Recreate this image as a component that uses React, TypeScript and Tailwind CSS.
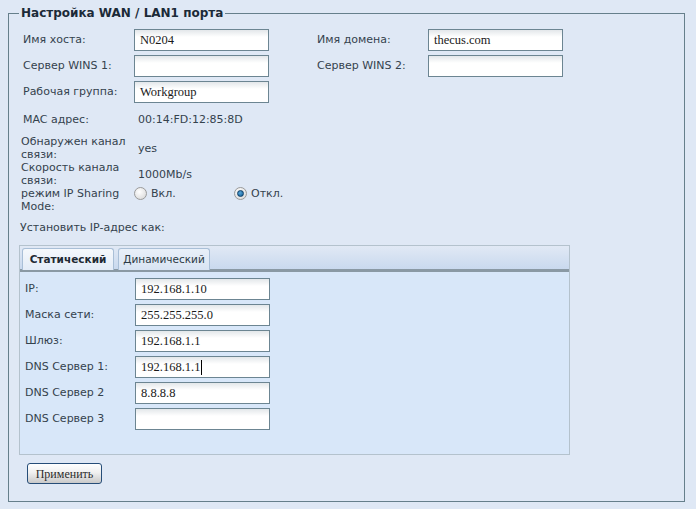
import React from "react";

const sans = "font-['DejaVu_Sans',Verdana,sans-serif]";
const serif = "font-['Liberation_Serif','Times_New_Roman',serif]";

function Field({ value = "", caret = false }: { value?: string; caret?: boolean }) {
  return (
    <div
      className={`${serif} flex h-[22px] w-[135px] items-center border border-[#6c8592] bg-[linear-gradient(#e3e7ea,#ffffff_7px)] pl-[5px] text-[12.5px] text-[#1a1a1a]`}
    >
      <span>{value}</span>
      {caret && <span className="ml-px inline-block h-[15px] w-px bg-black" />}
    </div>
  );
}

function Radio({ checked }: { checked?: boolean }) {
  return (
    <span className="flex h-[13px] w-[13px] items-center justify-center rounded-full border border-[#9a9a9a] bg-[radial-gradient(circle_at_40%_35%,#ffffff,#d4d4d4)]">
      {checked && <span className="h-[7px] w-[7px] rounded-full border border-[#0e3e66] bg-[radial-gradient(circle_at_40%_35%,#5aa6d8,#0d5a93)]" />}
    </span>
  );
}

const topRows = [
  ["Имя хоста:", "N0204", "Имя домена:", "thecus.com"],
  ["Сервер WINS 1:", "", "Сервер WINS 2:", ""],
  ["Рабочая группа:", "Workgroup", null, null],
];

const ipRows: [string, string, boolean?][] = [
  ["IP:", "192.168.1.10"],
  ["Маска сети:", "255.255.255.0"],
  ["Шлюз:", "192.168.1.1"],
  ["DNS Сервер 1:", "192.168.1.1", true],
  ["DNS Сервер 2", "8.8.8.8"],
  ["DNS Сервер 3", ""],
];

export default function App() {
  return (
    <div className={`${sans} min-h-[509px] w-[696px] bg-[#dfe8f5] pt-[6px] text-[11px] text-[#34424d]`}>
      <fieldset className="ml-2 w-[677px] border border-[#667f8b] px-[10px] pb-[17px]">
        <legend className="px-[2px] text-[12px] leading-[14px] font-bold text-[#1b2a38]">
          Настройка WAN / LAN1 порта
        </legend>

        <div className="pt-[9px]">
          {/* host / domain block */}
          <div className="grid grid-cols-[111px_135px_48px_111px_135px] gap-y-[4px] pl-1">
            {topRows.map((r, i) => (
              <React.Fragment key={i}>
                <div className="flex h-[22px] items-center">{r[0]}</div>
                <Field value={r[1] as string} />
                <div />
                {r[2] !== null ? (
                  <>
                    <div className="flex h-[22px] items-center">{r[2]}</div>
                    <Field value={r[3] as string} />
                  </>
                ) : (
                  <>
                    <div />
                    <div />
                  </>
                )}
              </React.Fragment>
            ))}
          </div>

          <div className="mt-[9px] flex h-[16px] items-center pl-1">
            <div className="w-[111px]">MAC адрес:</div>
            <div className="pl-1">00:14:FD:12:85:8D</div>
          </div>

          <div className="mt-[7px] flex h-[26px] items-center pl-[2px] leading-[13px]">
            <div className="w-[113px]">
              Обнаружен канал
              <br />
              связи:
            </div>
            <div className="pl-1">yes</div>
          </div>
          <div className="flex h-[26px] items-center pl-[2px] leading-[13px]">
            <div className="w-[113px]">
              Скорость канала
              <br />
              связи:
            </div>
            <div className="pl-1">1000Mb/s</div>
          </div>
          <div className="flex h-[26px] items-start pl-[2px] leading-[13px]">
            <div className="w-[113px]">
              режим IP Sharing
              <br />
              Mode:
            </div>
            <div className="flex w-[100px] items-center gap-[4px]">
              <Radio />
              <span>Вкл.</span>
            </div>
            <div className="flex items-center gap-[4px]">
              <Radio checked />
              <span>Откл.</span>
            </div>
          </div>

          <div className="mt-[7px] flex h-[16px] items-center pl-px">Установить IP-адрес как:</div>

          {/* tab panel */}
          <div className="mt-[9px] w-[551px] border border-[#b4c2cd] bg-[#d8e7f9]">
            <div className="flex h-[26px] gap-[4px] border-b-[3px] border-[#8a99a4] bg-[linear-gradient(#e1e9f5,#c9d9ee)] pt-[2px] pl-[2px]">
              <div className="flex h-[22px] w-[92px] items-center justify-center rounded-t-[3px] border border-b-0 border-[#a9bfd7] bg-[linear-gradient(#f5f8fc,#e3ecf7)] text-[10.5px] font-bold text-[#1f2a33]">
                Статический
              </div>
              <div className="flex h-[22px] w-[92px] items-center justify-center rounded-t-[3px] border border-b-0 border-[#a9bfd7] bg-[linear-gradient(#e9f0f9,#d8e4f3)] text-[10.5px] text-[#2c3a45]">
                Динамический
              </div>
            </div>
            <div className="flex flex-col gap-[4px] pt-[6px] pb-[24px] pl-[5px]">
              {ipRows.map(([label, value, caret]) => (
                <div key={label} className="flex h-[22px] items-center">
                  <div className="w-[110px]">{label}</div>
                  <Field value={value} caret={caret} />
                </div>
              ))}
            </div>
          </div>

          <button
            className={`${serif} mt-[8px] ml-[8px] flex h-[21px] w-[75px] items-center justify-center rounded-[3px] border border-[#264d78] bg-[linear-gradient(#ffffff,#f0f0f0_45%,#c9c9c9)] text-[12px] text-[#2b2b2b]`}
          >
            Применить
          </button>
        </div>
      </fieldset>
    </div>
  );
}
